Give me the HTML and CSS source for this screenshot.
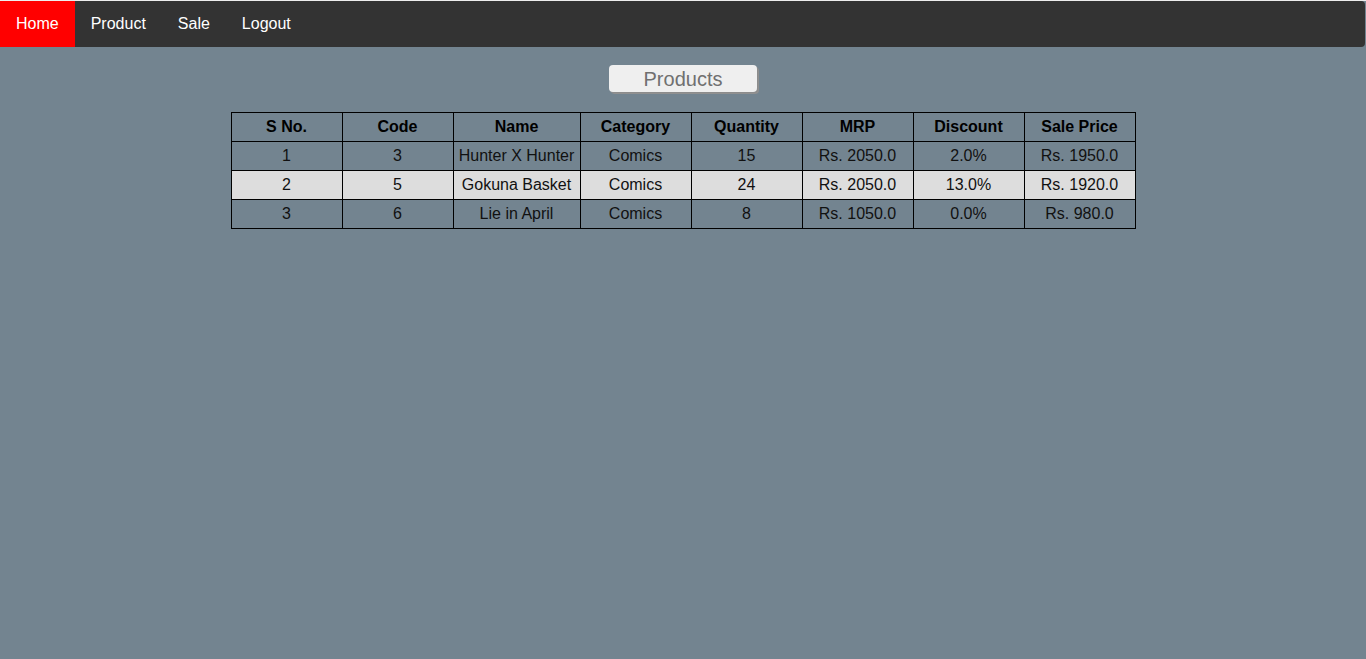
FILE: index.html
```html
<!DOCTYPE html>
<html>
<head>
<meta charset="utf-8">
<title>Products</title>
<link rel="stylesheet" href="styles.css">
</head>
<body>
<ul class="nav">
  <li><a class="active" href="#">Home</a></li>
  <li><a href="#">Product</a></li>
  <li><a href="#">Sale</a></li>
  <li><a href="#">Logout</a></li>
</ul>
<div class="title-wrap"><div class="title">Products</div></div>
<table class="grid">
  <colgroup>
    <col class="c"><col class="c"><col class="cw"><col class="c"><col class="c"><col class="c"><col class="c"><col class="c">
  </colgroup>
  <tr><th>S No.</th><th>Code</th><th>Name</th><th>Category</th><th>Quantity</th><th>MRP</th><th>Discount</th><th>Sale Price</th></tr>
  <tr><td>1</td><td>3</td><td>Hunter X Hunter</td><td>Comics</td><td>15</td><td>Rs. 2050.0</td><td>2.0%</td><td>Rs. 1950.0</td></tr>
  <tr class="alt"><td>2</td><td>5</td><td>Gokuna Basket</td><td>Comics</td><td>24</td><td>Rs. 2050.0</td><td>13.0%</td><td>Rs. 1920.0</td></tr>
  <tr><td>3</td><td>6</td><td>Lie in April</td><td>Comics</td><td>8</td><td>Rs. 1050.0</td><td>0.0%</td><td>Rs. 980.0</td></tr>
</table>
</body>
</html>
```
FILE: styles.css
```css
html, body {
  margin: 0;
  padding: 0;
}
body {
  background: #738490;
  border-top: 1px solid #eeeeee;
  font-family: "Liberation Sans", Arial, sans-serif;
  min-height: 658px;
}
.nav {
  list-style: none;
  margin: 0;
  padding: 0;
  width: 1365px;
  display: flex;
  background: #333333;
  border-radius: 0 4px 4px 0;
}
.nav a {
  display: block;
  color: #ffffff;
  text-decoration: none;
  font-size: 16px;
  line-height: 18px;
  padding: 14px 16px;
}
.nav a.active {
  background: #ff0000;
}
.title-wrap {
  display: flex;
  justify-content: center;
  margin-top: 18px;
}
.title {
  width: 148px;
  height: 27px;
  background: #efefef;
  color: #707070;
  font-size: 20px;
  line-height: 28px;
  text-align: center;
  border-radius: 4px;
  box-shadow: 1px 1px 0 #8c8c8c, 2px 2px 0 #909090;
}
.grid {
  border-collapse: collapse;
  margin: 20px auto 0;
  width: 905px;
  font-size: 16px;
  color: #111111;
}
.grid col.c { width: 111px; }
.grid col.cw { width: 127px; }
.grid th, .grid td {
  border: 1px solid #000000;
  height: 28px;
  padding: 0;
  text-align: center;
}
.grid th {
  font-weight: bold;
  color: #000000;
}
.grid tr.alt td {
  background: #dddddd;
}
```
